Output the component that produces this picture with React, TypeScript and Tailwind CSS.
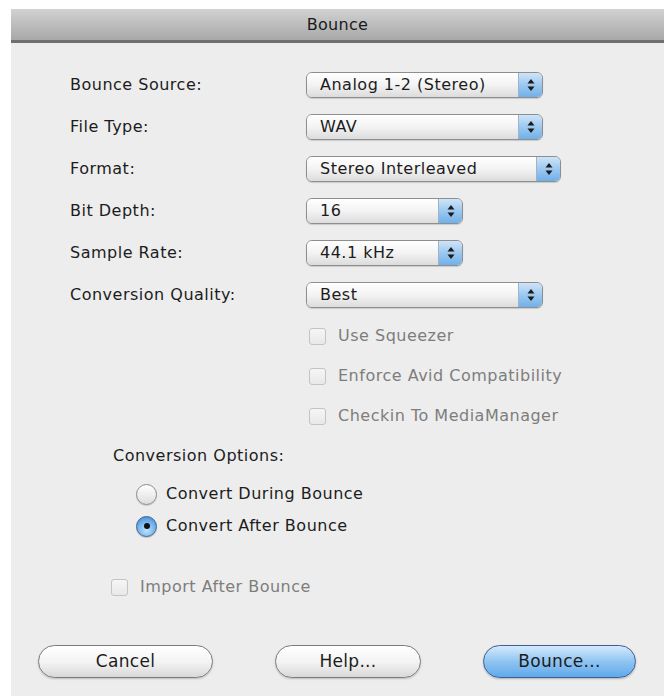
import React from 'react';

const font = { fontFamily: '"DejaVu Sans", "Liberation Sans", sans-serif' };

interface PopupProps {
  value: string;
  width: string;
}

const Popup = ({ value, width }: PopupProps) => (
  <div
    className={`${width} h-[26px] flex items-stretch rounded-[6px] border border-[#8e8e8e] overflow-hidden shadow-[0_1px_1px_rgba(0,0,0,0.15)]`}
  >
    <div className="flex-1 flex items-center pl-[13px] text-[16px] tracking-[0.5px] text-[#1c1c1c] bg-gradient-to-b from-[#ffffff] via-[#f3f3f3] to-[#dcdcdc]">
      {value}
    </div>
    <div className="w-[24px] flex items-center justify-center border-l border-[#9fb2cc] bg-gradient-to-b from-[#cfe4f8] via-[#9cc8f0] to-[#6fb0ea]">
      <svg width="8" height="14" viewBox="0 0 8 14">
        <path d="M4 1 L7.5 5.5 L0.5 5.5 Z" fill="#1a1a1a" />
        <path d="M4 13 L7.5 8.5 L0.5 8.5 Z" fill="#1a1a1a" />
      </svg>
    </div>
  </div>
);

const Checkbox = ({ label }: { label: string }) => (
  <div className="flex items-center gap-[12px] text-[16px] tracking-[0.5px] text-[#7d7d7d]">
    <div className="w-[17px] h-[17px] rounded-[3px] border border-[#c4c4c4] bg-gradient-to-b from-[#f6f6f6] to-[#e8e8e8]" />
    <span>{label}</span>
  </div>
);

const Radio = ({ label, checked }: { label: string; checked?: boolean }) => (
  <div className="h-[32px] flex items-center gap-[9px] text-[16px] tracking-[0.5px] text-[#1c1c1c]">
    {checked ? (
      <div className="w-[21px] h-[21px] rounded-full border border-[#3f5f8f] bg-[radial-gradient(circle_at_50%_70%,#bfe2fb_0%,#6fb2ee_55%,#3d7fd0_100%)] flex items-center justify-center shadow-[0_1px_1px_rgba(0,0,0,0.2)]">
        <div className="w-[6px] h-[6px] rounded-full bg-[#111]" />
      </div>
    ) : (
      <div className="w-[21px] h-[21px] rounded-full border border-[#8a8a8a] bg-gradient-to-b from-[#ffffff] to-[#dedede] shadow-[0_1px_1px_rgba(0,0,0,0.15)]" />
    )}
    <span>{label}</span>
  </div>
);

const rows = [
  { label: 'Bounce Source:', value: 'Analog 1-2 (Stereo)', width: 'w-[237px]' },
  { label: 'File Type:', value: 'WAV', width: 'w-[237px]' },
  { label: 'Format:', value: 'Stereo Interleaved', width: 'w-[255px]' },
  { label: 'Bit Depth:', value: '16', width: 'w-[157px]' },
  { label: 'Sample Rate:', value: '44.1 kHz', width: 'w-[157px]' },
  { label: 'Conversion Quality:', value: 'Best', width: 'w-[237px]' },
];

const App = () => {
  return (
    <div className="w-[664px] h-[696px] bg-white pl-[11px] pt-[9px]" style={font}>
      <div className="h-full flex flex-col">
        {/* window title */}
        <div className="h-[34px] shrink-0 flex items-center justify-center bg-gradient-to-b from-[#d2d2d2] to-[#a8a8a8] border-b-[3px] border-[#6f6f6f] text-[16px] tracking-[0.3px] text-[#1a1a1a]">
          Bounce
        </div>

        <div className="flex-1 bg-[#ededed] flex flex-col pt-[21px]">
          {rows.map((row) => (
            <div key={row.label} className="h-[42px] flex items-center">
              <div className="w-[295px] pl-[59px] text-[16px] tracking-[0.5px] text-[#1c1c1c]">{row.label}</div>
              <Popup value={row.value} width={row.width} />
            </div>
          ))}

          <div className="pl-[298px] flex flex-col">
            <div className="h-[40px] flex items-center">
              <Checkbox label="Use Squeezer" />
            </div>
            <div className="h-[40px] flex items-center">
              <Checkbox label="Enforce Avid Compatibility" />
            </div>
            <div className="h-[40px] flex items-center">
              <Checkbox label="Checkin To MediaManager" />
            </div>
          </div>

          <div className="h-[40px] flex items-center pl-[102px] text-[16px] tracking-[0.5px] text-[#1c1c1c]">
            Conversion Options:
          </div>
          <div className="pl-[125px] mt-[2px] flex flex-col">
            <Radio label="Convert During Bounce" />
            <Radio label="Convert After Bounce" checked />
          </div>

          <div className="h-[40px] mt-[25px] flex items-center pl-[100px]">
            <Checkbox label="Import After Bounce" />
          </div>

          <div className="mt-[38px] flex items-center pl-[27px]">
            <button className="w-[175px] h-[33px] rounded-full border border-[#7c7c7c] bg-gradient-to-b from-[#ffffff] via-[#f4f4f4] to-[#d9d9d9] text-[17px] tracking-[0.3px] text-[#1c1c1c] shadow-[0_1px_2px_rgba(0,0,0,0.2)]">
              Cancel
            </button>
            <button className="ml-[62px] w-[146px] h-[33px] rounded-full border border-[#7c7c7c] bg-gradient-to-b from-[#ffffff] via-[#f4f4f4] to-[#d9d9d9] text-[17px] tracking-[0.3px] text-[#1c1c1c] shadow-[0_1px_2px_rgba(0,0,0,0.2)]">
              Help...
            </button>
            <button className="ml-[62px] w-[153px] h-[33px] rounded-full border border-[#3d5f94] bg-gradient-to-b from-[#d4eafc] via-[#8fc4f1] to-[#5fa9ec] text-[17px] tracking-[0.3px] text-[#1c1c1c] shadow-[0_1px_2px_rgba(0,0,0,0.25)]">
              Bounce...
            </button>
          </div>
        </div>
      </div>
    </div>
  );
};

export default App;
